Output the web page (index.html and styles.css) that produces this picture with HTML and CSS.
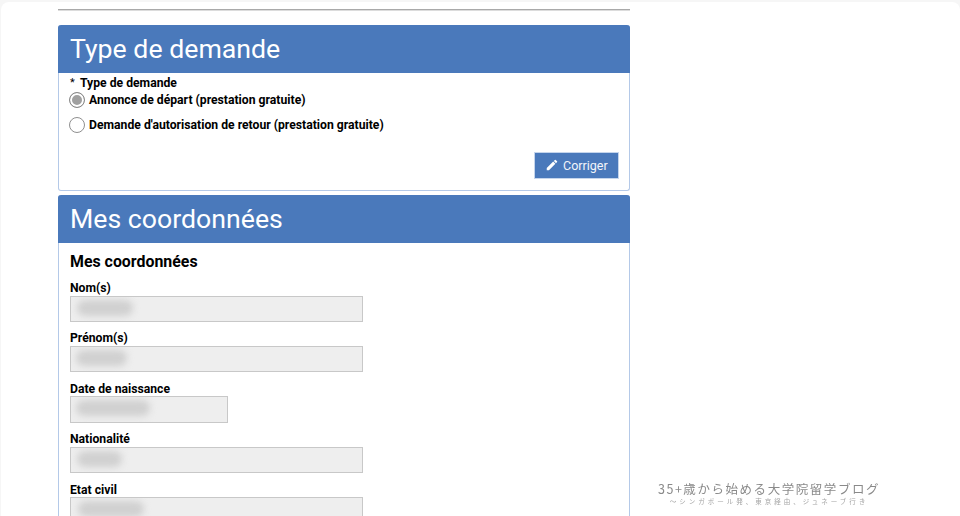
FILE: index.html
```html
<!DOCTYPE html>
<html lang="fr">
<head>
<meta charset="utf-8">
<title>Type de demande</title>
<link rel="stylesheet" href="styles.css">
</head>
<body>
<main class="sheet">
  <div class="column">
    <hr class="rule">
    <section class="panel">
      <h2 class="panel-title">Type de demande</h2>
      <div class="panel-body panel-body-type">
        <div class="req-label"><span class="star">*</span>Type de demande</div>
        <div class="radio-row"><span class="radio radio-on"></span><span>Annonce de départ (prestation gratuite)</span></div>
        <div class="radio-row radio-row-second"><span class="radio"></span><span>Demande d'autorisation de retour (prestation gratuite)</span></div>
        <div class="actions">
          <button class="btn" type="button">
            <svg class="btn-icon" viewBox="0 0 24 24" aria-hidden="true"><path d="M3 17.25V21h3.75L17.81 9.94l-3.75-3.75L3 17.25zM20.71 7.04a1 1 0 0 0 0-1.41l-2.34-2.34a1 1 0 0 0-1.41 0l-1.83 1.83 3.75 3.75 1.83-1.83z"/></svg>
            Corriger
          </button>
        </div>
      </div>
    </section>
    <section class="panel panel-second">
      <h2 class="panel-title">Mes coordonnées</h2>
      <div class="panel-body panel-body-form">
        <h3 class="sub-title">Mes coordonnées</h3>
        <div class="field"><label class="field-label">Nom(s)</label><div class="input"><span class="smudge smudge-a"></span></div></div>
        <div class="field"><label class="field-label">Prénom(s)</label><div class="input"><span class="smudge smudge-b"></span></div></div>
        <div class="field"><label class="field-label">Date de naissance</label><div class="input input-short"><span class="smudge smudge-c"></span></div></div>
        <div class="field"><label class="field-label">Nationalité</label><div class="input"><span class="smudge smudge-d"></span></div></div>
        <div class="field"><label class="field-label">Etat civil</label><div class="input"><span class="smudge smudge-e"></span></div></div>
      </div>
    </section>
  </div>
</main>
<div class="watermark">
  <div class="wm-main">35+歳から始める大学院留学ブログ</div>
  <div class="wm-sub">〜シンガポール発、東京経由、ジュネーブ行き</div>
</div>
</body>
</html>
```
FILE: styles.css
```css
html, body {
  margin: 0;
  height: 516px;
  overflow: hidden;
  background: #f6f6f6;
}
body {
  font-family: Roboto, "Liberation Sans", sans-serif;
  color: #000;
  position: relative;
}
.sheet {
  margin: 2px 0 0 1px;
  padding: 7px 0 0 57px;
  background: #fff;
  border-radius: 8px;
  height: 520px;
  box-sizing: border-box;
}
.column {
  width: 572px;
}
.rule {
  margin: 0 0 14px;
  border: 0;
  height: 2px;
  background: linear-gradient(#a9a9a9 50%, #dcdcdc 50%);
}
.panel {
  border: 1px solid #b4c9e8;
  border-top: 0;
  border-radius: 3px;
  background: #fff;
}
.panel-second {
  margin-top: 4px;
}
.panel-title {
  margin: 0 -1px;
  height: 48px;
  padding: 0 0 0 12px;
  background: #4a79bb;
  color: #fff;
  font-size: 26.7px;
  font-weight: 400;
  line-height: 48px;
  border-radius: 3px 3px 0 0;
}
.panel-body {
  padding: 0 10px 0 11px;
}
.panel-body-type {
  height: 117px;
}
.req-label {
  font-size: 12.2px;
  font-weight: 700;
  line-height: 16px;
  padding-top: 1.5px;
}
.star {
  display: inline-block;
  width: 10px;
  font-size: 11px;
  font-weight: 400;
  vertical-align: 1px;
}
.radio-row {
  display: flex;
  align-items: center;
  gap: 4px;
  font-size: 12.2px;
  font-weight: 700;
  height: 18px;
  line-height: 18px;
}
.radio-row-second {
  margin-top: 7px;
}
.radio {
  width: 14px;
  height: 14px;
  border: 1px solid #8f8f8f;
  border-radius: 50%;
  background: #fff;
  box-sizing: content-box;
  flex: none;
  margin-left: -1px;
}
.radio-on {
  background: #a0a0a0;
  box-shadow: inset 0 0 0 2px #fff;
  border-color: #8a8a8a;
}
.actions {
  display: flex;
  justify-content: flex-end;
  margin-top: 18px;
}
.btn {
  display: flex;
  align-items: center;
  gap: 4px;
  height: 27px;
  width: 85px;
  padding: 0 0 0 10px;
  border: 1px solid #c5d5ec;
  background: #4a79bb;
  color: #f2f5fa;
  font: 400 12.5px Roboto, "Liberation Sans", sans-serif;
}
.btn-icon {
  width: 14px;
  height: 14px;
  fill: #fff;
  flex: none;
}
.sub-title {
  margin: 0;
  padding-top: 9px;
  font-size: 15.9px;
  font-weight: 700;
  line-height: 20px;
}
.field {
  margin-top: 9.6px;
}
.sub-title + .field {
  margin-top: 9px;
}
.field-label {
  display: block;
  font-size: 12.2px;
  font-weight: 700;
  line-height: 14.5px;
}
.input {
  width: 293px;
  height: 26.4px;
  box-sizing: border-box;
  border: 1px solid #c8c8c8;
  background: #eeeeee;
  padding: 3px 7px;
  overflow: hidden;
}
.input-short {
  width: 158px;
}
.smudge {
  display: block;
  height: 16px;
  border-radius: 8px;
  background: #d0d0d0;
  filter: blur(3.5px);
}
.smudge-a { width: 56px; margin-left: -1px; }
.smudge-b { width: 51px; margin-left: -2px; }
.smudge-c { width: 74px; margin-left: -2px; }
.smudge-d { width: 45px; margin-left: -1px; }
.smudge-e { width: 66px; }
.watermark {
  position: absolute;
  left: 630px;
  top: 466px;
  width: 278px;
  height: 50px;
  background: #fff;
  text-align: center;
  color: #8a8a8a;
  font-family: "Noto Sans CJK JP", sans-serif;
  filter: blur(0.35px);
}
.wm-main {
  margin-top: 15px;
  font-size: 12.5px;
  line-height: 16px;
  letter-spacing: 1.55px;
}
.wm-sub {
  font-size: 6.5px;
  line-height: 9px;
  letter-spacing: 3px;
  color: #a4a4a4;
}
```
